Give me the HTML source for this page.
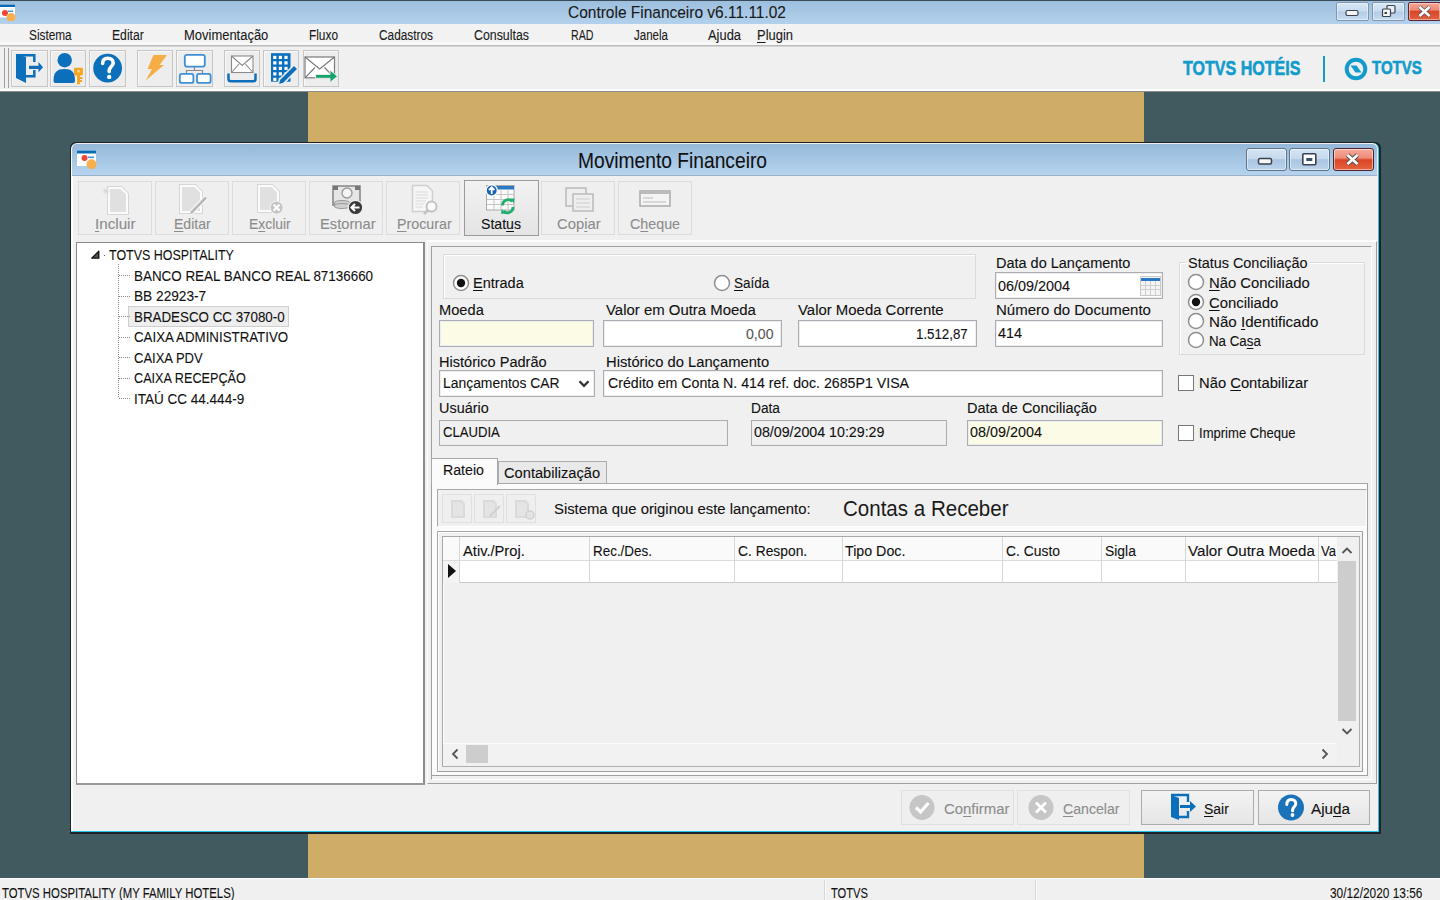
<!DOCTYPE html><html><head><meta charset="utf-8"><style>
html,body{margin:0;padding:0;width:1440px;height:900px;overflow:hidden;background:#405a5f;position:relative}
body>div,body>svg{position:absolute}
.t{position:absolute;white-space:nowrap;line-height:1;font-family:"Liberation Sans",sans-serif;-webkit-text-stroke:0.1px currentColor}
div .t{position:absolute}
u{text-decoration:underline;text-underline-offset:2px}
</style></head><body>
<div style="left:0px;top:92px;width:1440px;height:786px;background:#405a5f"></div>
<div style="left:308px;top:92px;width:836px;height:786px;background:#cfad66"></div>
<div style="left:0px;top:0px;width:1440px;height:24px;background:linear-gradient(#9cbedd,#b3d1ec)"></div>
<div style="left:0px;top:0px;width:1440px;height:1px;background:#3a4a58"></div>
<div class="t" style="left:568px;top:4.74px;font-size:15.99px;color:#1a1a1a;transform:scaleX(0.9683);transform-origin:0 0;">Controle Financeiro v6.11.11.02</div>
<svg style="left:0;top:3px" width="18" height="18" viewBox="0 0 18 18"><rect x="-1" y="1.5" width="16" height="13" fill="#fff"/><rect x="-1" y="1.5" width="16" height="2.5" fill="#0a6ab5"/><circle cx="5" cy="10" r="3" fill="#ee4433"/><rect x="8" y="7.5" width="5" height="1.5" fill="#4a8fd8"/><circle cx="11" cy="14.5" r="4.5" fill="#f6b050"/></svg>
<div style="left:1336px;top:2px;width:33px;height:19px;background:linear-gradient(#d6e6f4 0%,#c9dcef 45%,#b4cde6 55%,#c6dbef 100%);border:1px solid #7f97b0;border-radius:2px;box-shadow:inset 0 0 0 1px rgba(255,255,255,0.45);box-sizing:border-box"></div>
<div style="left:1372px;top:2px;width:33px;height:19px;background:linear-gradient(#d6e6f4 0%,#c9dcef 45%,#b4cde6 55%,#c6dbef 100%);border:1px solid #7f97b0;border-radius:2px;box-shadow:inset 0 0 0 1px rgba(255,255,255,0.45);box-sizing:border-box"></div>
<div style="left:1408px;top:2px;width:33px;height:19px;background:linear-gradient(#f3a596 0%,#ee8a76 40%,#d9472a 50%,#e0613f 100%);border:1px solid #5a2530;border-radius:2px;box-shadow:inset 0 0 0 1px rgba(255,255,255,0.45);box-sizing:border-box"></div>
<svg style="left:1344px;top:8px" width="16" height="10"><rect x="2" y="2.5" width="12" height="5" rx="1.5" fill="#f4f4f4" stroke="#3c4450" stroke-width="1.2"/></svg>
<svg style="left:1380px;top:4px" width="18" height="14"><rect x="7" y="1.5" width="8" height="7.5" rx="1" fill="#e8eef4" stroke="#3c4450" stroke-width="1.2"/><rect x="2.5" y="5" width="8" height="7.5" rx="1" fill="#f4f4f4" stroke="#3c4450" stroke-width="1.2"/><rect x="4.5" y="8" width="2.5" height="2" fill="#3c4450"/></svg>
<svg style="left:1416px;top:5px" width="18" height="13"><path d="M3.5 2 L13.5 11 M13.5 2 L3.5 11" stroke="#5a5a5a" stroke-width="4.2"/><path d="M3.5 2 L13.5 11 M13.5 2 L3.5 11" stroke="#fff" stroke-width="2.4"/></svg>
<div style="left:0px;top:24px;width:1440px;height:19px;background:#f2f2f2"></div>
<div style="left:0px;top:42px;width:1440px;height:3px;background:#f9f9f9"></div>
<div style="left:0px;top:45px;width:1440px;height:1px;background:#b9b9b9"></div>
<div style="left:0px;top:46px;width:1440px;height:1px;background:#d6d6d6"></div>
<div class="t" style="left:28.7px;top:28.79px;font-size:13.81px;color:#1a1a1a;transform:scaleX(0.8561);transform-origin:0 0;">Sistema</div>
<div class="t" style="left:112.4px;top:28.79px;font-size:13.81px;color:#1a1a1a;transform:scaleX(0.8816);transform-origin:0 0;">Editar</div>
<div class="t" style="left:184.3px;top:28.79px;font-size:13.81px;color:#1a1a1a;transform:scaleX(0.9400);transform-origin:0 0;">Movimentação</div>
<div class="t" style="left:309px;top:28.79px;font-size:13.81px;color:#1a1a1a;transform:scaleX(0.8589);transform-origin:0 0;">Fluxo</div>
<div class="t" style="left:379px;top:28.79px;font-size:13.81px;color:#1a1a1a;transform:scaleX(0.8581);transform-origin:0 0;">Cadastros</div>
<div class="t" style="left:474px;top:28.79px;font-size:13.81px;color:#1a1a1a;transform:scaleX(0.8958);transform-origin:0 0;">Consultas</div>
<div class="t" style="left:570.8px;top:28.79px;font-size:13.81px;color:#1a1a1a;transform:scaleX(0.7717);transform-origin:0 0;">RAD</div>
<div class="t" style="left:634px;top:28.79px;font-size:13.81px;color:#1a1a1a;transform:scaleX(0.8357);transform-origin:0 0;">Janela</div>
<div class="t" style="left:708px;top:28.79px;font-size:13.81px;color:#1a1a1a;transform:scaleX(0.9345);transform-origin:0 0;">Ajuda</div>
<div class="t" style="left:757px;top:28.79px;font-size:13.81px;color:#1a1a1a;transform:scaleX(0.9379);transform-origin:0 0;"><u>P</u>lugin</div>
<div style="left:0px;top:47px;width:1440px;height:45px;background:#f0f0f0"></div>
<div style="left:0px;top:89px;width:1440px;height:2px;background:#fcfcfc"></div>
<div style="left:0px;top:91px;width:1440px;height:1px;background:#8a8f92"></div>
<div style="left:4px;top:48px;width:1px;height:40px;background:#a0a0a0"></div>
<div style="left:8px;top:48px;width:1px;height:40px;background:#a0a0a0"></div>
<div style="left:11px;top:50px;width:37px;height:37px;background:#ededed;border:1px solid #c6c6c6;box-shadow:inset 1px 1px 0 #f8f8f8;box-sizing:border-box"></div>
<div style="left:50px;top:50px;width:36px;height:37px;background:#ededed;border:1px solid #c6c6c6;box-shadow:inset 1px 1px 0 #f8f8f8;box-sizing:border-box"></div>
<div style="left:89px;top:50px;width:37px;height:37px;background:#ededed;border:1px solid #c6c6c6;box-shadow:inset 1px 1px 0 #f8f8f8;box-sizing:border-box"></div>
<div style="left:137px;top:50px;width:36px;height:37px;background:#ededed;border:1px solid #c6c6c6;box-shadow:inset 1px 1px 0 #f8f8f8;box-sizing:border-box"></div>
<div style="left:176px;top:50px;width:37px;height:37px;background:#ededed;border:1px solid #c6c6c6;box-shadow:inset 1px 1px 0 #f8f8f8;box-sizing:border-box"></div>
<div style="left:224px;top:50px;width:36px;height:37px;background:#ededed;border:1px solid #c6c6c6;box-shadow:inset 1px 1px 0 #f8f8f8;box-sizing:border-box"></div>
<div style="left:263px;top:50px;width:36px;height:37px;background:#ededed;border:1px solid #c6c6c6;box-shadow:inset 1px 1px 0 #f8f8f8;box-sizing:border-box"></div>
<div style="left:303px;top:50px;width:36px;height:37px;background:#ededed;border:1px solid #c6c6c6;box-shadow:inset 1px 1px 0 #f8f8f8;box-sizing:border-box"></div>
<svg style="left:11px;top:50px" width="37" height="36" viewBox="0 0 37 36"><path d="M5 4 L15 7 L15 33 L5 28 Z" fill="#0b6fbc"/><path d="M5 5.2 L23.3 5.2 L23.3 12 M23.3 20 L23.3 26.3 L15 26.3" fill="none" stroke="#0b6fbc" stroke-width="2.5"/><path d="M18 15.8 L27.5 15.8 L27.5 12 L32 17.3 L27.5 22.2 L27.5 18.9 L18 18.9 Z" fill="#0b6fbc"/></svg>
<svg style="left:50px;top:50px" width="36" height="36" viewBox="0 0 36 36"><circle cx="14.7" cy="10.2" r="7.2" fill="#0b6fbc"/><path d="M3.5 31 C3.5 22 7 19 14.5 19 C22 19 25 22 25 31 Q25 33 23 33 L5.5 33 Q3.5 33 3.5 31 Z" fill="#0b6fbc"/><path d="M24 19 Q24 17.7 25.5 17.7 L31.5 17.7 Q33 17.7 33 19 L33 24 Q33 25.5 31 25.5 L30 25.5 L30 27 L32.5 27 L32.5 29 L30 29 L30 30 L32 30 L32 32 L30 32 L30 34.3 L27 34.3 L27 25.5 L26 25.5 Q24 25.5 24 24 Z" fill="#f5a623"/><rect x="27.3" y="20" width="2.4" height="2.4" fill="#f9d9a0"/></svg>
<svg style="left:89px;top:50px" width="37" height="36" viewBox="0 0 37 36"><circle cx="18.6" cy="18.1" r="14.4" fill="#0b6fbc"/><path d="M13.6 13.5 C13.6 9.8 16 8.3 18.9 8.3 C22.2 8.3 24.2 10.3 24.2 13 C24.2 16.3 20.2 16.8 20.2 20.5 L20.2 21.6" fill="none" stroke="#fff" stroke-width="3.6" stroke-linecap="round"/><circle cx="20.2" cy="26.9" r="2.2" fill="#fff"/></svg>
<svg style="left:137px;top:50px" width="36" height="36" viewBox="0 0 36 36"><path d="M16.5 5 L30 5 L22.5 15 L27 15 L8.7 30.5 L15 19 L10.5 19 Z" fill="#f6ad45"/></svg>
<svg style="left:176px;top:50px" width="37" height="36" viewBox="0 0 37 36"><path d="M18.5 16.6 L18.5 20 M10.5 24 L10.5 20.5 L26.5 20.5 L26.5 24" fill="none" stroke="#8a8a8a" stroke-width="1.2"/><rect x="8.8" y="4.8" width="20" height="11.8" rx="2" fill="#fff" stroke="#3d8fd6" stroke-width="1.8"/><rect x="3.8" y="23.9" width="13.6" height="9" rx="2" fill="#fff" stroke="#3d8fd6" stroke-width="1.8"/><rect x="21" y="23.9" width="13.6" height="9" rx="2" fill="#fff" stroke="#3d8fd6" stroke-width="1.8"/></svg>
<svg style="left:224px;top:50px" width="36" height="36" viewBox="0 0 36 36"><rect x="7.5" y="6" width="21.5" height="16.5" fill="#fff" stroke="#8a8a8a" stroke-width="1.1"/><path d="M7.5 6 L18.2 15.5 L29 6 M7.5 22.5 L15 14 M29 22.5 L21.5 14" fill="none" stroke="#8a8a8a" stroke-width="1.1"/><path d="M4.5 23.5 L4.5 29 Q4.5 31.3 6.8 31.3 L29.2 31.3 Q31.5 31.3 31.5 29 L31.5 23.5" fill="none" stroke="#0b6fbc" stroke-width="2.5"/></svg>
<svg style="left:263px;top:50px" width="36" height="36" viewBox="0 0 36 36"><rect x="8" y="3.2" width="19.5" height="28.5" fill="#0b6fbc"/><g fill="#fff"><rect x="10.2" y="5.8" width="3.2" height="3.2"/><rect x="15.799999999999999" y="5.8" width="3.2" height="3.2"/><rect x="21.4" y="5.8" width="3.2" height="3.2"/><rect x="10.2" y="11.3" width="3.2" height="3.2"/><rect x="15.799999999999999" y="11.3" width="3.2" height="3.2"/><rect x="21.4" y="11.3" width="3.2" height="3.2"/><rect x="10.2" y="16.8" width="3.2" height="3.2"/><rect x="15.799999999999999" y="16.8" width="3.2" height="3.2"/><rect x="21.4" y="16.8" width="3.2" height="3.2"/><rect x="10.2" y="22.3" width="3.2" height="3.2"/><rect x="15.799999999999999" y="22.3" width="3.2" height="3.2"/><rect x="21.4" y="22.3" width="3.2" height="3.2"/><rect x="10.2" y="27.8" width="3.2" height="3.2"/><rect x="15.799999999999999" y="27.8" width="3.2" height="3.2"/><rect x="21.4" y="27.8" width="3.2" height="3.2"/></g><path d="M15 35 L16.5 29.5 L31 15 L35 19 L20.5 33.5 Z" fill="#0b6fbc" stroke="#ededed" stroke-width="1.5"/></svg>
<svg style="left:303px;top:50px" width="36" height="36" viewBox="0 0 36 36"><rect x="2" y="7" width="29.5" height="20.8" fill="#fff" stroke="#7a7a7a" stroke-width="1.2"/><path d="M2 7 L16.7 19 L31.5 7 M2 27.8 L12 17.5 M31.5 27.8 L21.5 17.5" fill="none" stroke="#7a7a7a" stroke-width="1.2"/><path d="M12.5 24.5 L27 24.5 L27 20 L34.5 26.3 L27 32.5 L27 28.3 L12.5 28.3 Z" fill="#14a56b" stroke="#ededed" stroke-width="1"/></svg>
<div class="t" style="left:1183.1px;top:57.85px;font-size:20.93px;color:#129bcb;font-weight:bold;transform:scaleX(0.7667);transform-origin:0 0;-webkit-text-stroke:0.6px #129bcb;">TOTVS HOTÉIS</div>
<div style="left:1323px;top:56px;width:2px;height:26px;background:#129bcb"></div>
<svg style="left:1344px;top:57px" width="24" height="24" viewBox="0 0 24 24"><circle cx="12" cy="12" r="9.3" fill="none" stroke="#129bcb" stroke-width="4"/><path d="M6.5 8.5 L12.5 8.5 L17.5 15.5 L11.5 15.5 Z" fill="#129bcb"/></svg>
<div class="t" style="left:1372.1px;top:60.14px;font-size:17.88px;color:#129bcb;font-weight:bold;transform:scaleX(0.8402);transform-origin:0 0;-webkit-text-stroke:0.6px #129bcb;">TOTVS</div>
<div style="left:70px;top:142px;width:1311px;height:692px;background:#1b2328;border-radius:6px 6px 0 0"></div>
<div style="left:71px;top:143px;width:1308px;height:689px;background:linear-gradient(90deg,#fff 0,#fff 2px,#f0f0f0 2px);border-right:1px solid #1ec4e6;border-bottom:1px solid #1ec4e6;box-sizing:border-box;border-radius:6px 6px 0 0"></div>
<div style="left:72px;top:144px;width:1305px;height:32px;background:linear-gradient(#96b9da,#b6d4ee);border-radius:5px 5px 0 0"></div>
<div style="left:72px;top:175px;width:1305px;height:1px;background:#9ab2c8"></div>
<svg style="left:76px;top:149px" width="22" height="20" viewBox="0 0 22 20"><rect x="1" y="1.5" width="19" height="15.5" fill="#fff"/><rect x="1" y="1.5" width="19" height="3" fill="#0a6ab5"/><circle cx="8.5" cy="9" r="3" fill="#ee4433"/><rect x="12" y="7.5" width="6" height="1.6" fill="#4a8fd8"/><circle cx="15.5" cy="15.2" r="5" fill="#f6b050"/></svg>
<div class="t" style="left:577.5px;top:149.60px;font-size:21.22px;color:#111;transform:scaleX(0.9054);transform-origin:0 0;">Movimento Financeiro</div>
<div style="left:1246px;top:148px;width:41px;height:23px;background:linear-gradient(#d4e4f3 0%,#c6daee 45%,#a9c5e1 52%,#bcd4eb 100%);border:1px solid #5f7488;border-radius:3px;box-shadow:inset 0 0 0 1px rgba(255,255,255,0.5);box-sizing:border-box"></div>
<div style="left:1289px;top:148px;width:41px;height:23px;background:linear-gradient(#d4e4f3 0%,#c6daee 45%,#a9c5e1 52%,#bcd4eb 100%);border:1px solid #5f7488;border-radius:3px;box-shadow:inset 0 0 0 1px rgba(255,255,255,0.5);box-sizing:border-box"></div>
<div style="left:1333px;top:148px;width:41px;height:23px;background:linear-gradient(#f6aa9c 0%,#ef8d79 42%,#da4526 52%,#e5633f 100%);border:1px solid #4e2330;border-radius:3px;box-shadow:inset 0 0 0 1px rgba(255,255,255,0.5);box-sizing:border-box"></div>
<svg style="left:1256px;top:155px" width="20" height="12"><rect x="2.5" y="3.5" width="13" height="5.5" rx="1.5" fill="#f6f6f6" stroke="#3a4250" stroke-width="1.5"/></svg>
<svg style="left:1300px;top:151px" width="20" height="16"><rect x="2.8" y="2.8" width="13" height="11" rx="1" fill="#fff" stroke="#3a4250" stroke-width="1.6"/><rect x="6.3" y="7" width="6" height="3" fill="#3a5068"/></svg>
<svg style="left:1343px;top:151px" width="20" height="17"><path d="M4.5 4 L14.5 13 M14.5 4 L4.5 13" stroke="#555" stroke-width="4.6"/><path d="M4.5 4 L14.5 13 M14.5 4 L4.5 13" stroke="#fafafa" stroke-width="2.6"/></svg>
<div style="left:78px;top:181px;width:74px;height:54px;background:#efefef;border:1px solid #dcdcdc;box-sizing:border-box"></div>
<div class="t" style="left:95.2px;top:216.60px;font-size:14.97px;color:#8c8c8c;transform:scaleX(1.0142);transform-origin:0 0;"><u>I</u>ncluir</div>
<div style="left:155px;top:181px;width:74px;height:54px;background:#efefef;border:1px solid #dcdcdc;box-sizing:border-box"></div>
<div class="t" style="left:174.3px;top:216.60px;font-size:14.97px;color:#8c8c8c;transform:scaleX(0.9385);transform-origin:0 0;"><u>E</u>ditar</div>
<div style="left:232px;top:181px;width:74px;height:54px;background:#efefef;border:1px solid #dcdcdc;box-sizing:border-box"></div>
<div class="t" style="left:249.3px;top:216.60px;font-size:14.97px;color:#8c8c8c;transform:scaleX(0.9283);transform-origin:0 0;">E<u>x</u>cluir</div>
<div style="left:309px;top:181px;width:74px;height:54px;background:#efefef;border:1px solid #dcdcdc;box-sizing:border-box"></div>
<div class="t" style="left:319.7px;top:216.60px;font-size:14.97px;color:#8c8c8c;transform:scaleX(0.9827);transform-origin:0 0;">Es<u>t</u>ornar</div>
<div style="left:386px;top:181px;width:74px;height:54px;background:#efefef;border:1px solid #dcdcdc;box-sizing:border-box"></div>
<div class="t" style="left:397px;top:216.60px;font-size:14.97px;color:#8c8c8c;transform:scaleX(0.9529);transform-origin:0 0;"><u>P</u>rocurar</div>
<div style="left:464px;top:180px;width:75px;height:56px;background:linear-gradient(#f2f2f2,#e4e4e4);border:1px solid #9a9a9a;box-sizing:border-box"></div>
<div class="t" style="left:481px;top:216.60px;font-size:14.97px;color:#111;transform:scaleX(0.9425);transform-origin:0 0;">Stat<u>u</u>s</div>
<div style="left:541px;top:181px;width:74px;height:54px;background:#efefef;border:1px solid #dcdcdc;box-sizing:border-box"></div>
<div class="t" style="left:556.7px;top:216.60px;font-size:14.97px;color:#8c8c8c;transform:scaleX(0.9887);transform-origin:0 0;">Cop<u>i</u>ar</div>
<div style="left:618px;top:181px;width:74px;height:54px;background:#efefef;border:1px solid #dcdcdc;box-sizing:border-box"></div>
<div class="t" style="left:630px;top:216.60px;font-size:14.97px;color:#8c8c8c;transform:scaleX(0.9535);transform-origin:0 0;">C<u>h</u>eque</div>
<svg style="left:78px;top:181px" width="74" height="40"><path d="M31 7 L43 7 L49 13 L49 32 L31 32 Z" fill="#e0e0e0" stroke="#d6d6d6" stroke-width="4"/><path d="M31 7 L43 7 L49 13 L49 32 L31 32 Z" fill="#e0e0e0" stroke="#fbfbfb" stroke-width="2"/><path d="M28 6 L28 14 M24 10 L32 10 M25.2 7.2 L30.8 12.8 M30.8 7.2 L25.2 12.8" stroke="#e4e4e4" stroke-width="1.2"/><circle cx="28" cy="10" r="2" fill="#d8d8d8"/></svg>
<svg style="left:155px;top:181px" width="74" height="40"><path d="M26 5 L40 5 L46 11 L46 31 L26 31 Z" fill="#e0e0e0" stroke="#d6d6d6" stroke-width="4"/><path d="M26 5 L40 5 L46 11 L46 31 L26 31 Z" fill="#e0e0e0" stroke="#fbfbfb" stroke-width="2"/><path d="M36 32 L51 16.5" stroke="#fbfbfb" stroke-width="5"/><path d="M36 32 L51 16.5" stroke="#b8b8b8" stroke-width="2.6"/></svg>
<svg style="left:232px;top:181px" width="74" height="40"><path d="M27 5 L40 5 L46 11 L46 30 L27 30 Z" fill="#e0e0e0" stroke="#d6d6d6" stroke-width="4"/><path d="M27 5 L40 5 L46 11 L46 30 L27 30 Z" fill="#e0e0e0" stroke="#fbfbfb" stroke-width="2"/><circle cx="44.6" cy="26.6" r="6.5" fill="#c4c4c4" stroke="#f6f6f6" stroke-width="1"/><path d="M41.6 23.6 L47.6 29.6 M47.6 23.6 L41.6 29.6" stroke="#fff" stroke-width="2.2"/></svg>
<svg style="left:309px;top:181px" width="74" height="40"><rect x="24" y="5" width="27" height="19" fill="#e6e6e6" stroke="#8a8a8a" stroke-width="1.6"/><path d="M24 5 h5 v4 h-5z M46 5 h5 v4 h-5z" fill="#777"/><circle cx="38" cy="12" r="5" fill="#f4f4f4" stroke="#9a9a9a" stroke-width="1.4"/><ellipse cx="33" cy="22" rx="8" ry="2.5" fill="#cfcfcf" stroke="#999"/><ellipse cx="33" cy="25" rx="8" ry="2.5" fill="#cfcfcf" stroke="#999"/><circle cx="46.5" cy="26.5" r="7.2" fill="#3a3a3a" stroke="#efefef" stroke-width="1.2"/><path d="M50.5 26.5 L43 26.5 M46 23 L42.5 26.5 L46 30" stroke="#fff" stroke-width="2.2" fill="none"/></svg>
<svg style="left:386px;top:181px" width="74" height="40"><path d="M26.5 4.5 L41 4.5 L46.5 10 L46.5 30.5 L26.5 30.5 Z" fill="#f6f6f6" stroke="#cfcfcf" stroke-width="1.5"/><path d="M29.5 11 H42 M29.5 14 H42 M29.5 17 H42 M29.5 20 H40 M29.5 23 H38 M29.5 26 H37" stroke="#dadada" stroke-width="1.2"/><circle cx="45.5" cy="25.5" r="5" fill="#fafafa" stroke="#c2c2c2" stroke-width="2"/><path d="M41.8 29.2 L38 33" stroke="#c2c2c2" stroke-width="2.6"/></svg>
<svg style="left:464px;top:180px" width="75" height="40"><rect x="22.5" y="5.5" width="27.5" height="24.5" fill="#fbfbfb" stroke="#a8a8a8"/><rect x="23" y="6" width="27" height="3.5" fill="#2a78c5"/><g stroke="#c4c4c4" stroke-width="1"><path d="M23 14.5 H50 M23 19.5 H50 M23 24.5 H50 M30 9.5 V30 M37 9.5 V30 M44 9.5 V30"/></g><circle cx="27.7" cy="10.5" r="5.6" fill="#1c62b8" stroke="#fff" stroke-width="1.2"/><path d="M27.7 14 V7.5 M25 10 L27.7 7.3 L30.4 10" stroke="#fff" stroke-width="1.8" fill="none"/><path d="M38.5 25.5 A5.5 5.5 0 0 1 48 21.5 M49 27 A5.5 5.5 0 0 1 39.5 31" stroke="#1fae6c" stroke-width="2.8" fill="none"/><path d="M46 18.5 L50.5 18.5 L49.8 23.5 Z M41.5 33.8 L37 33.8 L37.8 28.8 Z" fill="#1fae6c"/></svg>
<svg style="left:541px;top:181px" width="74" height="40"><rect x="25" y="7" width="20" height="18" fill="#eee" stroke="#bbb" stroke-width="1.5"/><rect x="32" y="13" width="20" height="17" fill="#eee" stroke="#bbb" stroke-width="1.5"/><path d="M35 18 H49 M35 22 H49 M35 26 H49" stroke="#ccc"/></svg>
<svg style="left:618px;top:181px" width="74" height="40"><rect x="22" y="10" width="30" height="15" fill="#f4f4f4" stroke="#aaa" stroke-width="1.5"/><rect x="22" y="10" width="30" height="3" fill="#bbb"/><path d="M25 17 H35 M25 21 H48" stroke="#bbb"/></svg>
<div style="left:427px;top:240px;width:950px;height:1px;background:#fcfcfc"></div>
<div style="left:76px;top:242px;width:349px;height:543px;background:#fff;border:1px solid #8a8a8a;border-right:2px solid #8c8c8c;border-bottom:2px solid #9a9a9a;box-sizing:border-box"></div>
<svg style="left:88px;top:247px" width="14" height="14"><path d="M3.8 11.2 L10.8 11.2 L10.8 4.2 Z" fill="#555" stroke="#111" stroke-width="1.3" stroke-linejoin="round"/></svg>
<div class="t" style="left:108.75px;top:247.06px;font-size:15.26px;color:#111;transform:scaleX(0.8174);transform-origin:0 0;">TOTVS HOSPITALITY</div>
<div style="left:104px;top:255px;width:1px;height:1px;background:#555"></div>
<div style="left:118px;top:264px;width:1px;height:134px;background:repeating-linear-gradient(#8a8a8a 0 1px,transparent 1px 2px)"></div>
<div style="left:119px;top:275px;width:11px;height:1px;background:repeating-linear-gradient(90deg,#8a8a8a 0 1px,transparent 1px 2px)"></div>
<div class="t" style="left:133.75px;top:267.56px;font-size:15.26px;color:#111;transform:scaleX(0.8796);transform-origin:0 0;">BANCO REAL BANCO REAL 87136660</div>
<div style="left:119px;top:296px;width:11px;height:1px;background:repeating-linear-gradient(90deg,#8a8a8a 0 1px,transparent 1px 2px)"></div>
<div class="t" style="left:133.75px;top:288.13px;font-size:15.26px;color:#111;transform:scaleX(0.8964);transform-origin:0 0;">BB 22923-7</div>
<div style="left:128px;top:306px;width:161px;height:21px;background:#ededed;border:1px solid #cfcfcf;box-sizing:border-box"></div>
<div style="left:119px;top:316px;width:11px;height:1px;background:repeating-linear-gradient(90deg,#8a8a8a 0 1px,transparent 1px 2px)"></div>
<div class="t" style="left:133.75px;top:308.70px;font-size:15.26px;color:#111;transform:scaleX(0.8755);transform-origin:0 0;">BRADESCO CC 37080-0</div>
<div style="left:119px;top:337px;width:11px;height:1px;background:repeating-linear-gradient(90deg,#8a8a8a 0 1px,transparent 1px 2px)"></div>
<div class="t" style="left:133.75px;top:329.27px;font-size:15.26px;color:#111;transform:scaleX(0.8717);transform-origin:0 0;">CAIXA ADMINISTRATIVO</div>
<div style="left:119px;top:357px;width:11px;height:1px;background:repeating-linear-gradient(90deg,#8a8a8a 0 1px,transparent 1px 2px)"></div>
<div class="t" style="left:133.75px;top:349.84px;font-size:15.26px;color:#111;transform:scaleX(0.8532);transform-origin:0 0;">CAIXA PDV</div>
<div style="left:119px;top:378px;width:11px;height:1px;background:repeating-linear-gradient(90deg,#8a8a8a 0 1px,transparent 1px 2px)"></div>
<div class="t" style="left:133.75px;top:370.41px;font-size:15.26px;color:#111;transform:scaleX(0.8305);transform-origin:0 0;">CAIXA RECEPÇÃO</div>
<div style="left:119px;top:398px;width:11px;height:1px;background:repeating-linear-gradient(90deg,#8a8a8a 0 1px,transparent 1px 2px)"></div>
<div class="t" style="left:133.75px;top:390.98px;font-size:15.26px;color:#111;transform:scaleX(0.8863);transform-origin:0 0;">ITAÚ CC 44.444-9</div>
<div style="left:427px;top:241px;width:950px;height:543px;border:1px solid #a0a0a0;border-top-color:#fff;border-left-color:#fff;box-sizing:border-box"></div>
<div style="left:431px;top:246px;width:941px;height:534px;border:1px solid #a0a0a0;border-right-color:#fff;border-bottom-color:#fff;box-sizing:border-box"></div>
<div style="left:443px;top:254px;width:533px;height:45px;border:1px solid #dadada;box-shadow:inset 1px 1px 0 #fff;box-sizing:border-box"></div>
<svg style="left:451.5px;top:273.5px" width="18" height="18"><circle cx="9" cy="9" r="7.5" fill="#fff" stroke="#8f8f8f" stroke-width="1.5"/><circle cx="9" cy="9" r="4.2" fill="#111"/></svg>
<div class="t" style="left:473px;top:275.72px;font-size:14.24px;color:#111;transform:scaleX(1.0173);transform-origin:0 0;"><u>E</u>ntrada</div>
<svg style="left:712.5px;top:273.5px" width="18" height="18"><circle cx="9" cy="9" r="7.5" fill="#fff" stroke="#8f8f8f" stroke-width="1.5"/></svg>
<div class="t" style="left:734.25px;top:275.72px;font-size:14.24px;color:#111;transform:scaleX(0.9470);transform-origin:0 0;"><u>S</u>aída</div>
<div class="t" style="left:439.1px;top:302.62px;font-size:14.24px;color:#111;transform:scaleX(1.0287);transform-origin:0 0;">Moeda</div>
<div style="left:439px;top:320px;width:155px;height:27px;background:#fcfce6;border:1px solid #abadb3;box-shadow:inset 0 0 0 1px #eceef0;box-sizing:border-box"></div>
<div class="t" style="left:605.5px;top:302.72px;font-size:14.24px;color:#111;transform:scaleX(1.0488);transform-origin:0 0;">Valor em Outra Moeda</div>
<div style="left:603px;top:320px;width:179px;height:27px;background:#fff;border:1px solid #abadb3;box-shadow:inset 0 0 0 1px #eceef0;box-sizing:border-box"></div>
<div class="t" style="left:746.25px;top:326.92px;font-size:14.24px;color:#555;transform:scaleX(0.9920);transform-origin:0 0;">0,00</div>
<div class="t" style="left:798px;top:302.72px;font-size:14.24px;color:#111;transform:scaleX(1.0480);transform-origin:0 0;">Valor Moeda Corrente</div>
<div style="left:798px;top:320px;width:179px;height:27px;background:#fff;border:1px solid #abadb3;box-shadow:inset 0 0 0 1px #eceef0;box-sizing:border-box"></div>
<div class="t" style="left:916.25px;top:326.72px;font-size:14.24px;color:#111;transform:scaleX(0.9334);transform-origin:0 0;">1.512,87</div>
<div class="t" style="left:995.9px;top:255.72px;font-size:14.24px;color:#111;transform:scaleX(1.0171);transform-origin:0 0;">Data do Lançamento</div>
<div style="left:995px;top:272px;width:168px;height:27px;background:#fff;border:1px solid #abadb3;box-shadow:inset 0 0 0 1px #eceef0;box-sizing:border-box"></div>
<div class="t" style="left:998.2px;top:278.62px;font-size:14.24px;color:#111;transform:scaleX(1.0115);transform-origin:0 0;">06/09/2004</div>
<svg style="left:1140px;top:276px" width="21" height="20"><rect x="0.5" y="0.5" width="20" height="19" fill="#f4f4f4" stroke="#c8c8c8"/><rect x="1" y="2" width="19" height="3" fill="#2a78c5"/><g stroke="#d0d0d0"><path d="M1 9.5 H20 M1 13.5 H20 M5.5 5 V19 M10.5 5 V19 M15.5 5 V19"/></g></svg>
<div class="t" style="left:996px;top:303.12px;font-size:14.24px;color:#111;transform:scaleX(1.0526);transform-origin:0 0;">Número do Documento</div>
<div style="left:995px;top:320px;width:168px;height:27px;background:#fff;border:1px solid #abadb3;box-shadow:inset 0 0 0 1px #eceef0;box-sizing:border-box"></div>
<div class="t" style="left:998px;top:326.42px;font-size:14.24px;color:#111;transform:scaleX(1.0100);transform-origin:0 0;">414</div>
<div class="t" style="left:439px;top:354.62px;font-size:14.24px;color:#111;transform:scaleX(1.0229);transform-origin:0 0;">Histórico Padrão</div>
<div style="left:439px;top:370px;width:156px;height:27px;background:#fff;border:1px solid #abadb3;box-shadow:inset 0 0 0 1px #eceef0;box-sizing:border-box"></div>
<div class="t" style="left:442.5px;top:376.22px;font-size:14.24px;color:#111;transform:scaleX(0.9762);transform-origin:0 0;">Lançamentos CAR</div>
<svg style="left:578px;top:379px" width="12" height="10"><path d="M1.5 2.2 L6 6.8 L10.5 2.2" fill="none" stroke="#333" stroke-width="2.3"/></svg>
<div class="t" style="left:605.5px;top:354.62px;font-size:14.24px;color:#111;transform:scaleX(1.0362);transform-origin:0 0;">Histórico do Lançamento</div>
<div style="left:603px;top:370px;width:560px;height:27px;background:#fff;border:1px solid #abadb3;box-shadow:inset 0 0 0 1px #eceef0;box-sizing:border-box"></div>
<div class="t" style="left:607.5px;top:376.22px;font-size:14.24px;color:#111;transform:scaleX(0.9961);transform-origin:0 0;">Crédito em Conta N. 414 ref. doc. 2685P1 VISA</div>
<div class="t" style="left:439px;top:401.22px;font-size:14.24px;color:#111;transform:scaleX(1.0136);transform-origin:0 0;">Usuário</div>
<div style="left:439px;top:420px;width:289px;height:26px;background:#f0f0f0;border:1px solid #abadb3;box-shadow:inset 0 0 0 1px #eceef0;box-sizing:border-box"></div>
<div class="t" style="left:442.5px;top:424.82px;font-size:14.24px;color:#111;transform:scaleX(0.9216);transform-origin:0 0;">CLAUDIA</div>
<div class="t" style="left:751px;top:401.22px;font-size:14.24px;color:#111;transform:scaleX(0.9639);transform-origin:0 0;">Data</div>
<div style="left:751px;top:420px;width:196px;height:26px;background:#f0f0f0;border:1px solid #abadb3;box-shadow:inset 0 0 0 1px #eceef0;box-sizing:border-box"></div>
<div class="t" style="left:754px;top:424.82px;font-size:14.24px;color:#111;transform:scaleX(0.9986);transform-origin:0 0;">08/09/2004 10:29:29</div>
<div class="t" style="left:967px;top:401.22px;font-size:14.24px;color:#111;transform:scaleX(1.0198);transform-origin:0 0;">Data de Conciliação</div>
<div style="left:967px;top:420px;width:196px;height:26px;background:#fcfce6;border:1px solid #abadb3;box-shadow:inset 0 0 0 1px #eceef0;box-sizing:border-box"></div>
<div class="t" style="left:970px;top:424.82px;font-size:14.24px;color:#111;transform:scaleX(1.0101);transform-origin:0 0;">08/09/2004</div>
<div style="left:1179px;top:262px;width:186px;height:93px;border:1px solid #dadada;box-shadow:inset 1px 1px 0 #fff;box-sizing:border-box"></div>
<div style="left:1186px;top:256px;width:124px;height:14px;background:#f0f0f0"></div>
<div class="t" style="left:1188.2px;top:255.72px;font-size:14.24px;color:#111;transform:scaleX(1.0138);transform-origin:0 0;">Status Conciliação</div>
<svg style="left:1187px;top:273.4px" width="18" height="18"><circle cx="9" cy="9" r="7.5" fill="#fff" stroke="#8f8f8f" stroke-width="1.5"/></svg>
<div class="t" style="left:1208.6px;top:276.12px;font-size:14.24px;color:#111;transform:scaleX(1.0425);transform-origin:0 0;"><u>N</u>ão Conciliado</div>
<svg style="left:1187px;top:292.8px" width="18" height="18"><circle cx="9" cy="9" r="7.5" fill="#fff" stroke="#8f8f8f" stroke-width="1.5"/><circle cx="9" cy="9" r="4.2" fill="#111"/></svg>
<div class="t" style="left:1208.6px;top:295.52px;font-size:14.24px;color:#111;transform:scaleX(1.0420);transform-origin:0 0;"><u>C</u>onciliado</div>
<svg style="left:1187px;top:312px" width="18" height="18"><circle cx="9" cy="9" r="7.5" fill="#fff" stroke="#8f8f8f" stroke-width="1.5"/></svg>
<div class="t" style="left:1208.6px;top:314.72px;font-size:14.24px;color:#111;transform:scaleX(1.0628);transform-origin:0 0;">Não <u>I</u>dentificado</div>
<svg style="left:1187px;top:331px" width="18" height="18"><circle cx="9" cy="9" r="7.5" fill="#fff" stroke="#8f8f8f" stroke-width="1.5"/></svg>
<div class="t" style="left:1208.6px;top:333.72px;font-size:14.24px;color:#111;transform:scaleX(0.9347);transform-origin:0 0;">Na Ca<u>s</u>a</div>
<div style="left:1178px;top:375px;width:16px;height:16px;background:#fff;border:1px solid #777;box-sizing:border-box"></div>
<div class="t" style="left:1199px;top:375.72px;font-size:14.24px;color:#111;transform:scaleX(1.0380);transform-origin:0 0;">Não <u>C</u>ontabilizar</div>
<div style="left:1178px;top:425px;width:16px;height:16px;background:#fff;border:1px solid #777;box-sizing:border-box"></div>
<div class="t" style="left:1199px;top:425.52px;font-size:14.24px;color:#111;transform:scaleX(0.9175);transform-origin:0 0;">Imprime Cheque</div>
<div style="left:431px;top:483px;width:937px;height:293px;background:#fbfbfb;border:1px solid #a0a0a0;border-top-color:#a8a8a8;box-sizing:border-box"></div>
<div style="left:498px;top:461px;width:109px;height:22px;background:#e9e9e9;border:1px solid #acacac;border-bottom:none;box-sizing:border-box"></div>
<div style="left:431px;top:458px;width:67px;height:27px;background:#fbfbfb;border:1px solid #a8a8a8;border-bottom:none;box-sizing:border-box"></div>
<div class="t" style="left:443px;top:463.02px;font-size:14.24px;color:#111;transform:scaleX(0.9958);transform-origin:0 0;">Rateio</div>
<div class="t" style="left:504.4px;top:465.52px;font-size:14.24px;color:#111;transform:scaleX(1.0296);transform-origin:0 0;">Contabilização</div>
<div style="left:437px;top:489px;width:930px;height:38px;background:#f0f0f0;border:1px solid #a8a8a8;border-right-color:#fff;border-bottom-color:#fff;box-sizing:border-box"></div>
<div style="left:442px;top:494px;width:30px;height:29px;background:#efefef;border:1px solid #e0e0e0;box-sizing:border-box"></div>
<div style="left:474px;top:494px;width:30px;height:29px;background:#efefef;border:1px solid #e0e0e0;box-sizing:border-box"></div>
<div style="left:506px;top:494px;width:30px;height:29px;background:#efefef;border:1px solid #e0e0e0;box-sizing:border-box"></div>
<svg style="left:442px;top:494px" width="100" height="29"><g fill="#e4e4e4" stroke="#dadada" stroke-width="2"><path d="M10 7 L19 7 L22 10 L22 23 L10 23 Z"/><path d="M42 7 L51 7 L54 10 L54 23 L42 23 Z"/><path d="M74 7 L83 7 L86 10 L86 23 L74 23 Z"/></g><path d="M48 22 L58 12" stroke="#d0d0d0" stroke-width="2"/><circle cx="88" cy="21" r="4" fill="#e4e4e4" stroke="#d0d0d0" stroke-width="1.5"/></svg>
<div class="t" style="left:553.75px;top:502.02px;font-size:14.24px;color:#111;transform:scaleX(1.0427);transform-origin:0 0;">Sistema que originou este lançamento:</div>
<div class="t" style="left:842.5px;top:497.60px;font-size:21.22px;color:#1a1a1a;transform:scaleX(0.9677);transform-origin:0 0;-webkit-text-stroke:0;">Contas a Receber</div>
<div style="left:437px;top:531px;width:926px;height:241px;background:#f0f0f0;border:1px solid #a8a8a8;border-right-color:#a0a0a0;border-bottom-color:#a0a0a0;box-shadow:inset 1px 1px 0 #fff;box-sizing:border-box"></div>
<div style="left:442px;top:536px;width:918px;height:231px;background:#f0f0f0;border:1px solid #a8a8a8;border-right-color:#b0b0b0;border-bottom-color:#b0b0b0;box-shadow:inset 1px 0 0 #fff;box-sizing:border-box"></div>
<div style="left:443px;top:537px;width:894px;height:24px;background:#fafafa"></div>
<div style="left:443px;top:560px;width:894px;height:1px;background:#dcdcdc"></div>
<div style="left:459px;top:561px;width:878px;height:22px;background:#fff"></div>
<div style="left:443px;top:582px;width:894px;height:1px;background:#c8c8c8"></div>
<div style="left:443px;top:561px;width:16px;height:22px;background:#f4f4f4"></div>
<div style="left:459px;top:537px;width:1px;height:46px;background:#d6d6d6"></div>
<div style="left:589px;top:537px;width:1px;height:46px;background:#d6d6d6"></div>
<div style="left:734px;top:537px;width:1px;height:46px;background:#d6d6d6"></div>
<div style="left:842px;top:537px;width:1px;height:46px;background:#d6d6d6"></div>
<div style="left:1002px;top:537px;width:1px;height:46px;background:#d6d6d6"></div>
<div style="left:1101px;top:537px;width:1px;height:46px;background:#d6d6d6"></div>
<div style="left:1185px;top:537px;width:1px;height:46px;background:#d6d6d6"></div>
<div style="left:1318px;top:537px;width:1px;height:46px;background:#d6d6d6"></div>
<svg style="left:446px;top:563px" width="12" height="18"><path d="M2 1 L10 8 L2 15 Z" fill="#111"/></svg>
<div class="t" style="left:462.7px;top:543.97px;font-size:14.24px;color:#111;transform:scaleX(1.0319);transform-origin:0 0;">Ativ./Proj.</div>
<div class="t" style="left:592.9px;top:543.97px;font-size:14.24px;color:#111;transform:scaleX(0.9435);transform-origin:0 0;">Rec./Des.</div>
<div class="t" style="left:738.3px;top:543.97px;font-size:14.24px;color:#111;transform:scaleX(0.9712);transform-origin:0 0;">C. Respon.</div>
<div class="t" style="left:844.6px;top:543.97px;font-size:14.24px;color:#111;transform:scaleX(0.9996);transform-origin:0 0;">Tipo Doc.</div>
<div class="t" style="left:1005.5px;top:543.97px;font-size:14.24px;color:#111;transform:scaleX(0.9746);transform-origin:0 0;">C. Custo</div>
<div class="t" style="left:1104.5px;top:543.97px;font-size:14.24px;color:#111;transform:scaleX(0.9756);transform-origin:0 0;">Sigla</div>
<div class="t" style="left:1187.6px;top:543.97px;font-size:14.24px;color:#111;transform:scaleX(1.0639);transform-origin:0 0;">Valor Outra Moeda</div>
<div style="left:1321.4px;top:535px;width:15px;height:25px;overflow:hidden"><div class="t" style="left:0;top:8.8px;font-size:14.24px;color:#111;transform:scaleX(0.92);transform-origin:0 0">Va</div></div>
<div style="left:1337px;top:537px;width:20px;height:207px;background:#f0f0f0"></div>
<div style="left:1338px;top:561px;width:18px;height:160px;background:#cdcdcd"></div>
<svg style="left:1340px;top:544px" width="14" height="12"><path d="M2.5 9 L7 4.5 L11.5 9" fill="none" stroke="#555" stroke-width="1.8"/></svg>
<svg style="left:1340px;top:726px" width="14" height="12"><path d="M2.5 3 L7 7.5 L11.5 3" fill="none" stroke="#555" stroke-width="1.8"/></svg>
<div style="left:443px;top:743px;width:894px;height:1px;background:#fbfbfb"></div>
<div style="left:443px;top:744px;width:894px;height:21px;background:#f2f2f2"></div>
<div style="left:466px;top:745px;width:22px;height:18px;background:#cdcdcd"></div>
<svg style="left:449px;top:747px" width="12" height="14"><path d="M8.5 2.5 L4 7 L8.5 11.5" fill="none" stroke="#555" stroke-width="1.8"/></svg>
<svg style="left:1319px;top:747px" width="12" height="14"><path d="M3.5 2.5 L8 7 L3.5 11.5" fill="none" stroke="#555" stroke-width="1.8"/></svg>
<div style="left:901px;top:790px;width:113px;height:35px;background:#efefef;border:1px solid #e0e0e0;box-sizing:border-box"></div>
<div style="left:1017px;top:790px;width:113px;height:35px;background:#efefef;border:1px solid #e0e0e0;box-sizing:border-box"></div>
<div style="left:1141px;top:790px;width:113px;height:35px;background:linear-gradient(#f3f3f3,#e5e5e5);border:1px solid #acacac;box-sizing:border-box"></div>
<div style="left:1258px;top:790px;width:112px;height:35px;background:linear-gradient(#f3f3f3,#e5e5e5);border:1px solid #acacac;box-sizing:border-box"></div>
<svg style="left:908px;top:794px" width="28" height="28"><circle cx="14" cy="13.5" r="12.5" fill="#c6c6c6"/><path d="M8 13.5 L12.5 18 L20.5 9" fill="none" stroke="#fff" stroke-width="3.2"/></svg>
<div class="t" style="left:943.7px;top:801.67px;font-size:14.53px;color:#8c8c8c;transform:scaleX(1.0267);transform-origin:0 0;">Co<u>n</u>firmar</div>
<svg style="left:1027px;top:794px" width="28" height="28"><circle cx="14" cy="13.5" r="12.5" fill="#c6c6c6"/><path d="M9 8.5 L19 18.5 M19 8.5 L9 18.5" stroke="#fff" stroke-width="3"/></svg>
<div class="t" style="left:1063.4px;top:801.67px;font-size:14.53px;color:#8c8c8c;transform:scaleX(0.9731);transform-origin:0 0;"><u>C</u>ancelar</div>
<svg style="left:1169px;top:793px" width="30" height="30"><path d="M2 2 L10 5 L10 27 L2 24 Z" fill="#0b6fbc"/><path d="M2 2 L19 2 L19 9 M19 18 L19 24 L10 24" fill="none" stroke="#0b6fbc" stroke-width="2.4"/><path d="M11 12 L21 12 L21 8 L27 13.5 L21 19 L21 15 L11 15 Z" fill="#0b6fbc"/></svg>
<div class="t" style="left:1204px;top:801.67px;font-size:14.53px;color:#111;transform:scaleX(0.9595);transform-origin:0 0;"><u>S</u>air</div>
<svg style="left:1277px;top:794px" width="28" height="28"><circle cx="14" cy="13.5" r="13" fill="#1a73b8"/><path d="M9.8 10.5 C9.8 7 12 5.5 14.3 5.5 C17 5.5 18.8 7.3 18.8 9.7 C18.8 12.5 15.6 13 15.6 16 L15.6 16.8" fill="none" stroke="#fff" stroke-width="3" stroke-linecap="round"/><circle cx="15.5" cy="21" r="1.9" fill="#fff"/></svg>
<div class="t" style="left:1311.3px;top:801.67px;font-size:14.53px;color:#111;transform:scaleX(1.0491);transform-origin:0 0;">Aju<u>d</u>a</div>
<div style="left:0px;top:878px;width:1440px;height:22px;background:#f0f0f0"></div>
<div style="left:0px;top:878px;width:1440px;height:1px;background:#fdfdfd"></div>
<div class="t" style="left:1.7px;top:885.72px;font-size:14.24px;color:#111;transform:scaleX(0.7989);transform-origin:0 0;">TOTVS HOSPITALITY (MY FAMILY HOTELS)</div>
<div style="left:824px;top:880px;width:1px;height:20px;background:#d8d8d8"></div>
<div style="left:825px;top:880px;width:1px;height:20px;background:#fafafa"></div>
<div style="left:1035px;top:880px;width:1px;height:20px;background:#d8d8d8"></div>
<div style="left:1036px;top:880px;width:1px;height:20px;background:#fafafa"></div>
<div class="t" style="left:831px;top:885.72px;font-size:14.24px;color:#111;transform:scaleX(0.7835);transform-origin:0 0;">TOTVS</div>
<div class="t" style="left:1329.5px;top:885.72px;font-size:14.24px;color:#111;transform:scaleX(0.8342);transform-origin:0 0;">30/12/2020 13:56</div>
</body></html>
